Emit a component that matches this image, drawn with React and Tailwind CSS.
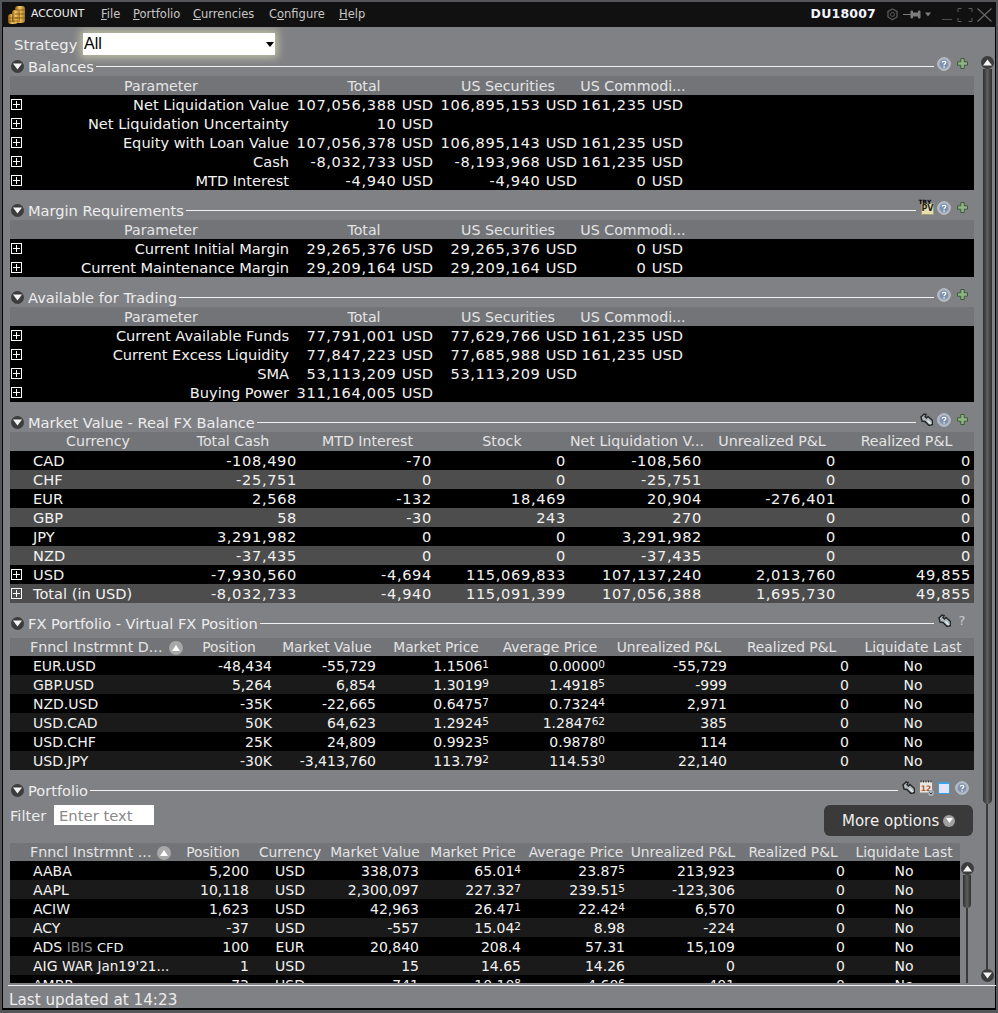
import React from "react";

const font = { fontFamily: '"DejaVu Sans", Verdana, sans-serif' };

function Coins() {
  return (
    <svg width="19" height="20" viewBox="0 0 19 20">
      <defs>
        <linearGradient id="g" x1="0" x2="1">
          <stop offset="0" stopColor="#8a5a10" />
          <stop offset=".45" stopColor="#f2c766" />
          <stop offset="1" stopColor="#a8741c" />
        </linearGradient>
      </defs>
      <rect x="8" y="1" width="10" height="17" rx="3" fill="url(#g)" />
      <rect x="1" y="9" width="10" height="10" rx="3" fill="url(#g)" />
      <rect x="5" y="5" width="8" height="13" rx="2.5" fill="url(#g)" />
      <path d="M8 5h10M8 9h10M8 13h10M1 13h10M1 16h10" stroke="#7a5010" strokeWidth=".8" />
    </svg>
  );
}

function Arrow({ up }) {
  return (
    <span className="w-[13px] h-[13px] rounded-full bg-[#3c3c3c] flex items-center justify-center shrink-0">
      <svg width="9" height="7" viewBox="0 0 9 7">
        <path d={up ? "M4.5 0.5 9 6.5H0Z" : "M0 0.5H9L4.5 6.5Z"} fill="#f4f4f4" />
      </svg>
    </span>
  );
}

function Help() {
  return (
    <svg width="14" height="14" viewBox="0 0 14 14">
      <circle cx="7" cy="7" r="6.3" fill="#aab4c2" stroke="#c4c8ce" />
      <circle cx="7" cy="7" r="4.4" fill="#7f93ad" />
      <path d="M5.3 5.6C5.4 3.8 8.8 3.8 8.8 5.6 8.8 6.9 7 6.8 7 8.3" stroke="#fff" strokeWidth="1.2" fill="none" />
      <rect x="6.4" y="9.3" width="1.3" height="1.3" fill="#fff" />
    </svg>
  );
}
function Plus() {
  return (
    <svg width="11" height="11" viewBox="0 0 11 11">
      <path d="M3.8.5h3.4v3.3h3.3v3.4H7.2v3.3H3.8V7.2H.5V3.8h3.3Z" fill="#8db583" stroke="#3d5a3a" />
    </svg>
  );
}
function Wrench() {
  return (
    <svg width="13" height="13" viewBox="0 0 13 13">
      <path d="M1 4 4 1 6 1.500 5 3.500 6.500 5 8 3.500 12.500 7.500 12.500 11.500 9 12.500 5 8.500 2 8Z" fill="#aeb8bd" stroke="#25282a" strokeWidth="1.500" />
      <path d="M7.500 7.500 11 11" stroke="#e4ecef" strokeWidth="1.500" />
    </svg>
  );
}
function TryPv() {
  return (
    <span className="relative w-[15px] h-[15px] block">
      <span className="absolute left-[2px] top-[3px] w-[13px] h-[12px] bg-[#e6dfae] border border-[#a59f78] text-[8px] leading-[10px] font-bold text-[#222] text-center">PV</span>
      <span className="absolute left-0 -top-[1px] text-[6px] leading-[6px] font-bold text-black">TRY</span>
    </span>
  );
}
function Calendar() {
  return (
    <svg width="15" height="16" viewBox="0 0 15 16">
      <rect x=".5" y="1.500" width="13" height="11.500" fill="#e8e6df" stroke="#888" />
      <path d="M2 .5v2M4.500.5v2M7 .5v2M9.500.5v2M12 .5v2" stroke="#333" />
      <text x="7" y="11" fontSize="7.500" textAnchor="middle" fill="#b05a3a" fontFamily="DejaVu Sans" fontWeight="700">12</text>
      <circle cx="12" cy="13" r="3" fill="#a9b0b6" />
      <path d="M10.500 12.500 12 14 13.500 12.500" stroke="#333" fill="none" />
    </svg>
  );
}
function WindowIcon() {
  return <span className="block w-3 h-3 border-t-2 border-x border-b border-[#3f9fe0] bg-[#e4e4f8]" />;
}

function Section({ title, icons = [] }) {
  return (
    <div className="mt-[10px] h-5 w-[960px] ml-px flex items-center text-[#ededed] text-[14.6px]">
      <Arrow />
      <span className="ml-[4px] pt-[2px] shrink-0 leading-5">{title}</span>
      <span className="flex-1 h-px bg-[#f2f2f2] ml-[2px] mr-px" />
      {icons.map((ic, i) => (
        <span key={i} className="w-[18px] flex justify-center -mt-[5px]">
          {ic}
        </span>
      ))}
    </div>
  );
}

function PlusBox() {
  return (
    <span className="w-[11px] h-[11px] border border-white ml-px shrink-0 relative flex items-center justify-center">
      <span className="absolute w-[7px] h-px bg-white" />
      <span className="absolute h-[7px] w-px bg-white" />
    </span>
  );
}

function Sup({ v, s }) {
  return (
    <span>
      {v}
      {s !== undefined && <span className="text-[10.500px] relative -top-[3px]">{s}</span>}
    </span>
  );
}

function Num({ t }) {
  if (!t) return null;
  const usd = t.endsWith(" USD");
  const n = usd ? t.slice(0, -3) : t;
  return (
    <>
      <span className="tracking-[0.65px]">{n}</span>
      {usd ? "USD" : ""}
    </>
  );
}

const balCols = "grid-cols-[282px_144px_144px_106px_1fr]";
const balHead = ["Parameter", "Total", "US Securities", "US Commodi..."];

function HeaderRow({ cols, labels, first, pad = "pt-px" }) {
  return (
    <div className={`grid ${cols} h-[19px] ${pad} bg-[#737478] text-[#e4e4e4] text-[14.200px] leading-[19px] overflow-hidden`}>
      {labels.map((l, i) => (
        <div key={i} className={`text-center whitespace-nowrap ${i === 0 ? first : ""}`}>
          {l}
        </div>
      ))}
    </div>
  );
}

function BalanceTable({ rows }) {
  return (
    <div className="w-[964px]">
      <HeaderRow cols={balCols} labels={balHead} first="pl-[20px]" />
      {rows.map((r, i) => (
        <div key={i} className={`grid ${balCols} h-[19px] bg-black text-[#f2f2f2] text-[14.6px] leading-[19px]`}>
          <div className="flex items-center justify-between pr-[3px]">
            <PlusBox />
            <span className="whitespace-nowrap">{r[0]}</span>
          </div>
          <div className="text-right pr-[3px] whitespace-nowrap"><Num t={r[1]} /></div>
          <div className="text-right pr-[3px] whitespace-nowrap"><Num t={r[2]} /></div>
          <div className="text-right pr-[3px] whitespace-nowrap"><Num t={r[3]} /></div>
        </div>
      ))}
    </div>
  );
}

const mvCols = "grid-cols-[156px_134px_135px_134px_136px_134px_135px]";
const mvRows = [
  ["CAD", "-108,490", "-70", "0", "-108,560", "0", "0"],
  ["CHF", "-25,751", "0", "0", "-25,751", "0", "0"],
  ["EUR", "2,568", "-132", "18,469", "20,904", "-276,401", "0"],
  ["GBP", "58", "-30", "243", "270", "0", "0"],
  ["JPY", "3,291,982", "0", "0", "3,291,982", "0", "0"],
  ["NZD", "-37,435", "0", "0", "-37,435", "0", "0"],
  ["USD", "-7,930,560", "-4,694", "115,069,833", "107,137,240", "2,013,760", "49,855", 1],
  ["Total (in USD)", "-8,032,733", "-4,940", "115,091,399", "107,056,388", "1,695,730", "49,855", 1],
];

const fxCols = "grid-cols-[173px_92px_104px_114px_114px_124px_121px_122px]";
const fxRows = [
  ["EUR.USD", "-48,434", "-55,729", ["1.1506", "1"], ["0.0000", "0"], "-55,729"],
  ["GBP.USD", "5,264", "6,854", ["1.3019", "9"], ["1.4918", "5"], "-999"],
  ["NZD.USD", "-35K", "-22,665", ["0.6475", "7"], ["0.7324", "4"], "2,971"],
  ["USD.CAD", "50K", "64,623", ["1.2924", "5"], ["1.2847", "62"], "385"],
  ["USD.CHF", "25K", "24,809", ["0.9923", "5"], ["0.9878", "0"], "114"],
  ["USD.JPY", "-30K", "-3,413,760", ["113.79", "2"], ["114.53", "0"], "22,140"],
];

const pfCols = "grid-cols-[164px_78px_76px_94px_102px_104px_110px_110px_112px]";
const pfRows = [
  ["AABA", "5,200", "USD", "338,073", ["65.01", "4"], ["23.87", "5"], "213,923"],
  ["AAPL", "10,118", "USD", "2,300,097", ["227.32", "7"], ["239.51", "5"], "-123,306"],
  ["ACIW", "1,623", "USD", "42,963", ["26.47", "1"], ["22.42", "4"], "6,570"],
  ["ACY", "-37", "USD", "-557", ["15.04", "2"], ["8.98"], "-224"],
  [
    <>
      ADS <span className="text-[13.500px] text-[#8a8a8a]">IBIS</span> <span className="text-[13px]">CFD</span>
    </>,
    "100", "EUR", "20,840", ["208.4"], ["57.31"], "15,109",
  ],
  [
    <>
      AIG <span className="text-[13.500px]">WAR Jan19'21...</span>
    </>,
    "1", "USD", "15", ["14.65"], ["14.26"], "0",
  ],
  ["AMBP", "73", "USD", "741", ["10.10", "8"], ["4.60", "6"], "401"],
];

function Thumbed({ w, h }) {
  return (
    <>
      <div className={`${w} ${h} rounded-b-full bg-gradient-to-r from-[#2e2e2e] via-[#5f5f5f] to-[#2e2e2e] shrink-0`} />
      <div className="w-[2px] flex-1 bg-[#3a3a3a]" />
    </>
  );
}

export default function App() {
  return (
    <div style={font} className="w-[998px] h-[1013px] bg-[#55565a] pt-[2px] px-[2px] pb-[3px] overflow-hidden">
      <div className="h-full border-x border-black border-b-2 flex flex-col bg-[#808185]">
        {/* title bar */}
        <div className="h-[25px] -mx-px bg-[#111111] flex items-center shrink-0 text-[#c8c8c8] text-[11.500px]">
          <span className="ml-[3px] w-[22px] flex justify-center">
            <Coins />
          </span>
          <span className="ml-[4px] w-[70px] text-[10.800px] text-[#efefef]">ACCOUNT</span>
          <span className="w-[32px]"><u>F</u>ile</span>
          <span className="w-[60px]"><u>P</u>ortfolio</span>
          <span className="w-[76px]"><u>C</u>urrencies</span>
          <span className="w-[70px]">C<u>o</u>nfigure</span>
          <span><u>H</u>elp</span>
          <span className="ml-auto font-bold text-[#f2f4ff] text-[12.500px] tracking-[0.2px]">DU18007</span>
          <span className="ml-[10px]">
            <svg width="13" height="13" viewBox="0 0 13 13" className="block">
              <path d="M6.500 1 11 3.500V9L6.500 11.800 2 9V3.500Z" fill="none" stroke="#5a5a5a" strokeWidth="1.300" />
              <circle cx="6.500" cy="6.400" r="2" fill="none" stroke="#5a5a5a" />
            </svg>
          </span>
          <span className="ml-[4px]">
            <svg width="28" height="10" viewBox="0 0 28 10" className="block">
              <path d="M0 4.500h7M7 4.500h3M8 1h1.500v7H8ZM10 3h6v3h-6ZM15.500 1H17v7h-1.500Z" stroke="#7d7d7d" fill="#7d7d7d" />
              <path d="M22 2.500h6L25 6.500Z" fill="#7d7d7d" />
            </svg>
          </span>
          <span className="ml-[11px] mr-[4px]">
            <svg width="50" height="16" viewBox="0 0 50 16" className="block">
              <path d="M0 12.500H10" stroke="#4f4f4f" />
              <path d="M16 5V1.500h3.500M26.500 1.500H30V5M16 11v3.500h3.500M26.500 14.500H30V11" stroke="#5c5c5c" fill="none" />
              <path d="M35.500 1.500 49.500 14.500M49.500 1.500 35.500 14.500" stroke="#6a6a6a" strokeWidth="1.200" />
            </svg>
          </span>
        </div>

        {/* body */}
        <div className="h-[956px] flex shrink-0 overflow-hidden">
          <div className="w-[971px] pl-[7px] shrink-0">
            <div className="mt-[6px] h-[22px] flex items-center">
              <span className="ml-[4px] pt-[2px] w-[69px] text-[#ededed] text-[14.800px]">Strategy</span>
              <div className="w-[192px] h-[22px] bg-white shadow-[0_0_9px_3px_rgba(240,240,190,0.55)] flex items-center justify-between pl-[1px] pr-[1px] text-black text-[16px]" style={{ fontFamily: '"Liberation Sans", Arial, sans-serif' }}>
                <span>All</span>
                <svg width="8" height="5" viewBox="0 0 8 5"><path d="M0 0H8L4 5Z" fill="#000" /></svg>
              </div>
            </div>

            <div className="-mt-[9px]">
              <Section title="Balances" icons={[<Help />, <Plus />]} />
            </div>
            <BalanceTable
              rows={[
                ["Net Liquidation Value", "107,056,388 USD", "106,895,153 USD", "161,235 USD"],
                ["Net Liquidation Uncertainty", "10 USD", "", ""],
                ["Equity with Loan Value", "107,056,378 USD", "106,895,143 USD", "161,235 USD"],
                ["Cash", "-8,032,733 USD", "-8,193,968 USD", "161,235 USD"],
                ["MTD Interest", "-4,940 USD", "-4,940 USD", "0 USD"],
              ]}
            />

            <Section title="Margin Requirements" icons={[<TryPv />, <Help />, <Plus />]} />
            <BalanceTable
              rows={[
                ["Current Initial Margin", "29,265,376 USD", "29,265,376 USD", "0 USD"],
                ["Current Maintenance Margin", "29,209,164 USD", "29,209,164 USD", "0 USD"],
              ]}
            />

            <Section title="Available for Trading" icons={[<Help />, <Plus />]} />
            <BalanceTable
              rows={[
                ["Current Available Funds", "77,791,001 USD", "77,629,766 USD", "161,235 USD"],
                ["Current Excess Liquidity", "77,847,223 USD", "77,685,988 USD", "161,235 USD"],
                ["SMA", "53,113,209 USD", "53,113,209 USD", ""],
                ["Buying Power", "311,164,005 USD", "", ""],
              ]}
            />

            <Section title="Market Value - Real FX Balance" icons={[<Wrench />, <Help />, <Plus />]} />
            <div className="w-[964px]">
              <HeaderRow
                cols={mvCols}
                pad=""
                labels={["Currency", "Total Cash", "MTD Interest", "Stock", "Net Liquidation V...", "Unrealized P&L", "Realized P&L"]}
                first="pl-[20px]"
              />
              {mvRows.map((r, i) => (
                <div key={i} className={`grid ${mvCols} h-[19px] text-[#f2f2f2] text-[14.600px] leading-[19px] ${i % 2 ? "bg-[#4d4d4d]" : "bg-black"}`}>
                  <div className="flex items-center">
                    {r[7] ? <PlusBox /> : <span className="w-[12px]" />}
                    <span className="ml-[11px] whitespace-nowrap">{r[0]}</span>
                  </div>
                  {r.slice(1, 7).map((c, j) => (
                    <div key={j} className="text-right pr-[3px] whitespace-nowrap"><Num t={c} /></div>
                  ))}
                </div>
              ))}
            </div>

            <Section title="FX Portfolio - Virtual FX Position" icons={[<Wrench />, <span className="text-[13px] leading-[14px] text-[#c9c9c9]">?</span>]} />
            <div className="w-[964px] mt-[5px]">
              <div className={`grid ${fxCols} h-[18px] pt-px bg-[#737478] text-[#e4e4e4] text-[13.800px] leading-[17px]`}>
                <div className="pl-[20px] flex items-center gap-[7px]">
                  <span className="whitespace-nowrap text-[14.300px]">Fnncl Instrmnt D...</span>
                  <span className="w-[14px] h-[14px] rounded-full bg-[#a8a8a8] flex items-center justify-center">
                    <svg width="8" height="6" viewBox="0 0 8 6"><path d="M4 0 8 6H0Z" fill="#fff" /></svg>
                  </span>
                </div>
                {["Position", "Market Value", "Market Price", "Average Price", "Unrealized P&L", "Realized P&L", "Liquidate Last"].map((l) => (
                  <div key={l} className="text-center whitespace-nowrap">{l}</div>
                ))}
              </div>
              {fxRows.map((r, i) => (
                <div key={i} className={`grid ${fxCols} h-[19px] pt-px text-[#f2f2f2] text-[14px] leading-[18px] ${i % 2 ? "bg-[#1a1a1a]" : "bg-black"}`}>
                  <div className="pl-[23px]">{r[0]}</div>
                  <div className="text-right pr-[3px]">{r[1]}</div>
                  <div className="text-right pr-[3px] whitespace-nowrap">{r[2]}</div>
                  <div className="text-right pr-[4px]"><Sup v={r[3][0]} s={r[3][1]} /></div>
                  <div className="text-right pr-[2px]"><Sup v={r[4][0]} s={r[4][1]} /></div>
                  <div className="text-right pr-[4px]">{r[5]}</div>
                  <div className="text-right pr-[3px]">0</div>
                  <div className="text-center">No</div>
                </div>
              ))}
            </div>

            <Section title="Portfolio" icons={[<Wrench />, <Calendar />, <WindowIcon />, <Help />]} />
            <div className="h-[43px] pt-[5px] flex items-start w-[964px]">
              <span className="w-[44px] pt-px text-[#ededed] text-[14.600px] leading-5">Filter</span>
              <span className="w-[100px] h-5 pt-px bg-white text-[#8a8a8a] text-[14.800px] leading-[19px] pl-[5px]">Enter text</span>
              <div className="ml-auto mr-px w-[149px] h-[31px] pt-[2px] rounded-[6px] bg-[#3a3a3a] flex items-center pl-[18px] text-[#efefef] text-[15px]">
                More options
                <span className="ml-[4px] -mt-[2px] w-3 h-3 rounded-full bg-[#a0a0a0] flex items-center justify-center">
                  <svg width="7" height="5" viewBox="0 0 7 5"><path d="M0 0H7L3.500 5Z" fill="#fff" /></svg>
                </span>
              </div>
            </div>
            <div className="flex">
              <div className="w-[950px] shrink-0">
                <div className={`grid ${pfCols} h-[18px] pt-px bg-[#737478] text-[#e4e4e4] text-[13.800px] leading-[17px]`}>
                  <div className="pl-[20px] flex items-center gap-[6px]">
                    <span className="whitespace-nowrap text-[14.300px]">Fnncl Instrmnt ...</span>
                    <span className="w-[14px] h-[14px] rounded-full bg-[#a8a8a8] flex items-center justify-center">
                      <svg width="8" height="6" viewBox="0 0 8 6"><path d="M4 0 8 6H0Z" fill="#fff" /></svg>
                    </span>
                  </div>
                  {["Position", "Currency", "Market Value", "Market Price", "Average Price", "Unrealized P&L", "Realized P&L", "Liquidate Last"].map((l) => (
                    <div key={l} className="text-center whitespace-nowrap">{l}</div>
                  ))}
                </div>
                {pfRows.map((r, i) => (
                  <div key={i} className={`grid ${pfCols} h-[19px] pt-px text-[#f2f2f2] text-[14px] leading-[18px] ${i % 2 ? "bg-[#1a1a1a]" : "bg-black"}`}>
                    <div className="pl-[23px] whitespace-nowrap">{r[0]}</div>
                    <div className="text-right pr-[3px]">{r[1]}</div>
                    <div className="text-center">{r[2]}</div>
                    <div className="text-right pr-[3px]">{r[3]}</div>
                    <div className="text-right pr-[3px]"><Sup v={r[4][0]} s={r[4][1]} /></div>
                    <div className="text-right pr-[3px]"><Sup v={r[5][0]} s={r[5][1]} /></div>
                    <div className="text-right pr-[3px]">{r[6]}</div>
                    <div className="text-right pr-[3px]">0</div>
                    <div className="text-center">No</div>
                  </div>
                ))}
              </div>
              <div className="w-[14px] flex flex-col items-center h-[140px] pt-[19px]">
                <Arrow up />
                <Thumbed w="w-[8px]" h="h-[33px]" />
              </div>
            </div>
          </div>

          {/* main scrollbar */}
          <div className="w-[14px] ml-[6px] flex flex-col items-center pt-[29px] pb-[1px] shrink-0">
            <Arrow up />
            <Thumbed w="w-[9px]" h="h-[735px]" />
            <Arrow />
          </div>
        </div>

        {/* status */}
        <div className="flex-1 pt-[2px] ml-[5px] -mr-px">
          <div className="h-px bg-[#f2f2f2]" />
          <div className="pl-px h-[22px] leading-[28px] text-[#ededed] text-[15.200px]">Last updated at 14:23</div>
        </div>
      </div>
    </div>
  );
}
